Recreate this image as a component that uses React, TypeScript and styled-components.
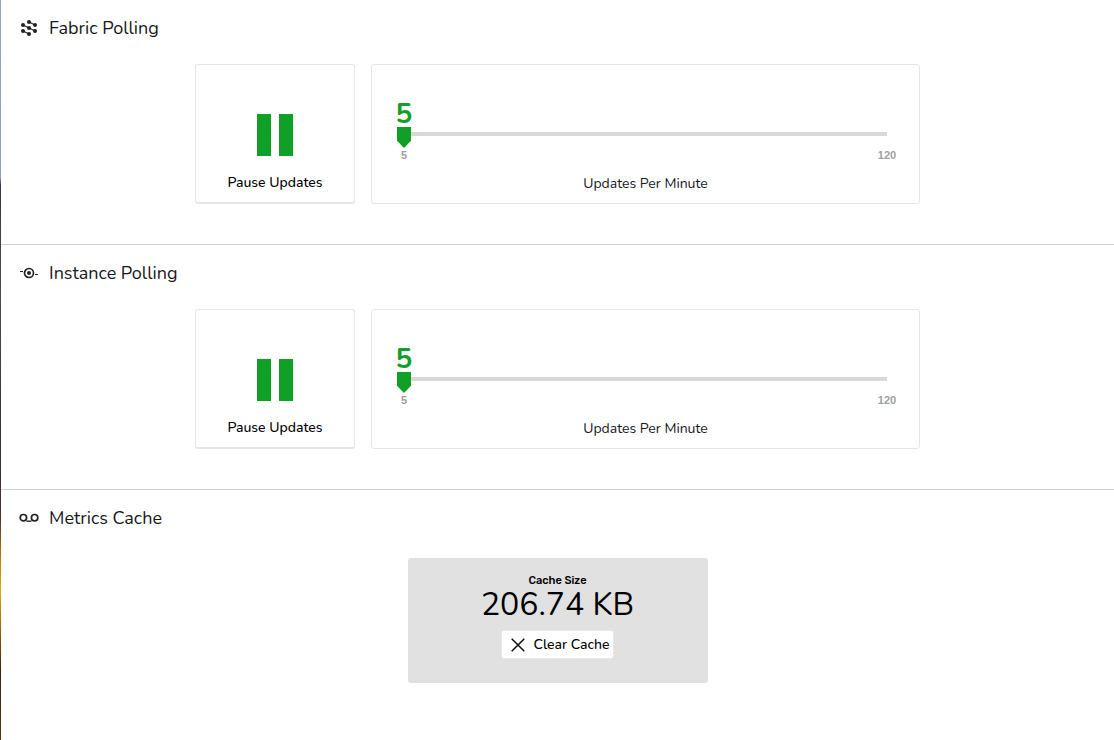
import { useState } from 'react';
import type { ReactNode } from 'react';
import styled, { createGlobalStyle } from 'styled-components';

const GlobalStyle = createGlobalStyle`
  * { box-sizing: border-box; }
  body {
    margin: 0;
    background: #fff;
    color: #16181c;
    font-family: Nunito, Lato, "Open Sans", sans-serif;
  }
  button, input { font: inherit; }
`;

const green = '#11a027';

const Page = styled.main`
  min-height: 100vh;
  padding-left: 1px;
  background: linear-gradient(
      #94a7bd 0%, #8fa0b4 24%, #35394c 25%, #4d4852 40%, #3d3036 60%,
      #4a3230 70%, #c88406 76%, #e0a800 80%, #7a4a08 87%, #33221a 91%, #5c3808 100%
    ) left / 1px 100% no-repeat;
`;

const Section = styled.section`
  padding-bottom: 40px;
  & + & { border-top: 1px solid #cfcfcf; }
`;

const Header = styled.header`
  display: flex;
  align-items: center;
  gap: 10px;
  height: 56px;
  padding-left: 18px;
`;

const Title = styled.h2`
  margin: 0;
  font-size: 18px;
  line-height: 24px;
  font-weight: 400;
`;

const Controls = styled.div`
  display: flex;
  gap: 16px;
  max-width: 725px;
  margin: 8px auto 0;
`;

const PauseButton = styled.button`
  display: flex;
  flex-direction: column;
  align-items: center;
  justify-content: flex-end;
  gap: 17px;
  width: 160px;
  height: 140px;
  padding: 0 0 9px;
  border: 1px solid #e6e6e6;
  border-bottom-width: 2px;
  border-radius: 3px;
  background: #fff;
  color: #000;
  font-size: 14px;
  line-height: 20px;
  font-weight: 500;
  cursor: pointer;
`;

const RateCard = styled.div`
  display: flex;
  flex: 1;
  flex-direction: column;
  height: 140px;
  padding: 36px 25px 0;
  border: 1px solid #e6e6e6;
  border-radius: 3px;
`;

const Value = styled.output`
  display: flex;
  justify-content: center;
  width: 14px;
  color: ${green};
  font-size: 28px;
  line-height: 26px;
  font-weight: 700;
`;

const Slider = styled.input`
  appearance: none;
  display: block;
  width: 100%;
  height: 21px;
  margin: 0;
  background: linear-gradient(#d9d9d9, #d9d9d9) center 5px / calc(100% - 14px) 4px no-repeat;
  cursor: pointer;

  &::-webkit-slider-thumb {
    appearance: none;
    width: 14px;
    height: 21px;
    background: ${green};
    clip-path: polygon(0 0, 100% 0, 100% 66%, 50% 100%, 0 66%);
  }
`;

const Scale = styled.div`
  display: flex;
  justify-content: space-between;
  color: #a0a0a0;
  font-family: "Liberation Sans", Arial, sans-serif;
  font-size: 11px;
  line-height: 14px;
  font-weight: 700;
`;

const Bound = styled.span`
  display: flex;
  justify-content: center;
  width: 14px;
`;

const RateLabel = styled.label`
  margin-top: 12px;
  text-align: center;
  font-size: 14px;
  line-height: 20px;
`;

const CachePanel = styled.div`
  display: flex;
  flex-direction: column;
  align-items: center;
  width: 300px;
  height: 125px;
  margin: 12px auto 0;
  padding-top: 16px;
  border-radius: 3px;
  background: #e1e1e1;
  color: #000;
`;

const CacheLabel = styled.span`
  font-family: Rubik, Roboto, sans-serif;
  font-size: 11px;
  line-height: 14px;
  font-weight: 500;
`;

const CacheSize = styled.strong`
  font-size: 32px;
  line-height: 34px;
  font-weight: 400;
`;

const ClearButton = styled.button`
  display: flex;
  align-items: center;
  gap: 9px;
  height: 29px;
  margin-top: 8px;
  padding: 0 4px 0 9px;
  border: 1px solid #e8e8e8;
  border-radius: 3px;
  background: #fff;
  color: #000;
  font-size: 14px;
  line-height: 20px;
  font-weight: 500;
  cursor: pointer;
`;

function FabricIcon() {
  return (
    <svg width="20" height="20" viewBox="0 0 20 20" fill="#222" stroke="#222" aria-hidden="true">
      <path d="M4 7 10 10 16 13M10 4 16 7M4 13 10 16" strokeWidth="1.2" />
      <g stroke="none">
        <circle cx="10" cy="4" r="2" /><circle cx="4" cy="7" r="2" /><circle cx="16" cy="7" r="2" />
        <circle cx="10" cy="10" r="2" /><circle cx="4" cy="13" r="2" /><circle cx="16" cy="13" r="2" />
        <circle cx="10" cy="16" r="2" />
      </g>
    </svg>
  );
}

function InstanceIcon() {
  return (
    <svg width="20" height="20" viewBox="0 0 20 20" fill="none" stroke="#222" aria-hidden="true">
      <circle cx="10" cy="10" r="4.5" strokeWidth="1.7" />
      <circle cx="10" cy="10" r="2" fill="#222" stroke="none" />
      <path d="M1 8.5h3M16 11.5h3" strokeWidth="1.2" />
    </svg>
  );
}

function CacheIcon() {
  return (
    <svg width="20" height="20" viewBox="0 0 20 20" fill="none" stroke="#222" strokeWidth="1.7" aria-hidden="true">
      <circle cx="4.4" cy="9.7" r="3.2" />
      <circle cx="15.6" cy="9.7" r="3.2" />
      <path d="M7.5 13.2h5" strokeWidth="1.4" />
    </svg>
  );
}

function PauseIcon() {
  return (
    <svg width="36" height="42" viewBox="0 0 36 42" fill={green} aria-hidden="true">
      <path d="M0 0h14v42H0zM22 0h14v42H22z" />
    </svg>
  );
}

function CloseIcon() {
  return (
    <svg width="14" height="14" viewBox="0 0 14 14" fill="none" stroke="#111" strokeWidth="1.5" aria-hidden="true">
      <path d="M.7.7 13.3 13.3M13.3.7.7 13.3" />
    </svg>
  );
}

function PollingSection({ id, title, icon }: { id: string; title: string; icon: ReactNode }) {
  const [rate, setRate] = useState(5);
  return (
    <Section>
      <Header>{icon}<Title>{title}</Title></Header>
      <Controls>
        <PauseButton type="button"><PauseIcon />Pause Updates</PauseButton>
        <RateCard>
          <Value htmlFor={id}>{rate}</Value>
          <Slider id={id} type="range" min={5} max={120} value={rate}
            onChange={(e) => setRate(Number(e.target.value))} />
          <Scale><Bound>5</Bound><Bound>120</Bound></Scale>
          <RateLabel htmlFor={id}>Updates Per Minute</RateLabel>
        </RateCard>
      </Controls>
    </Section>
  );
}

export default function App() {
  return (
    <>
      <GlobalStyle />
      <Page>
        <PollingSection id="fabric-rate" title="Fabric Polling" icon={<FabricIcon />} />
        <PollingSection id="instance-rate" title="Instance Polling" icon={<InstanceIcon />} />
        <Section>
          <Header><CacheIcon /><Title>Metrics Cache</Title></Header>
          <CachePanel>
            <CacheLabel>Cache Size</CacheLabel>
            <CacheSize>206.74 KB</CacheSize>
            <ClearButton type="button"><CloseIcon />Clear Cache</ClearButton>
          </CachePanel>
        </Section>
      </Page>
    </>
  );
}
